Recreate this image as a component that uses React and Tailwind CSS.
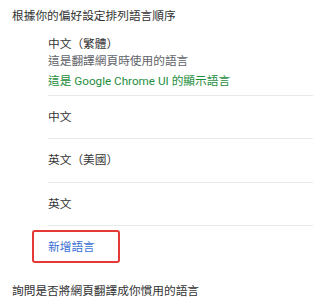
const font = { fontFamily: "Roboto, 'Noto Sans CJK TC', sans-serif" };

const Row = ({ label, h }) => (
  <div className={`flex items-center border-b border-[#e8eaed] ${h}`}>
    <span>{label}</span>
  </div>
);

export default function App() {
  return (
    <div
      className="w-[313px] h-[305px] overflow-hidden bg-white text-[11.7px] leading-[17px] text-[#333333]"
      style={font}
    >
      {/* section title */}
      <div className="h-[32px] flex items-center pl-[12px]">根據你的偏好設定排列語言順序</div>

      {/* language list */}
      <div className="pl-[48px]">
        <div className="pt-[4px] pb-[5px] border-b border-[#e8eaed]">
          <div>中文（繁體）</div>
          <div className="text-[#5f6368]">這是翻譯網頁時使用的語言</div>
          <div className="mt-[3px] text-[#1e8e3e]">這是 Google Chrome UI 的顯示語言</div>
        </div>
        <Row label="中文" h="h-[43px]" />
        <Row label="英文（美國）" h="h-[44px]" />
        <Row label="英文" h="h-[43px]" />
      </div>

      {/* add language */}
      <div className="mt-[4px] ml-[32px] w-[88px] h-[33px] flex items-center pl-[14px] pt-[2px] border-2 border-[#e53935] rounded-[3px] text-[#3b6fd4]">
        新增語言
      </div>

      <div className="mt-[20px] pl-[12px]">詢問是否將網頁翻譯成你慣用的語言</div>
    </div>
  );
}
